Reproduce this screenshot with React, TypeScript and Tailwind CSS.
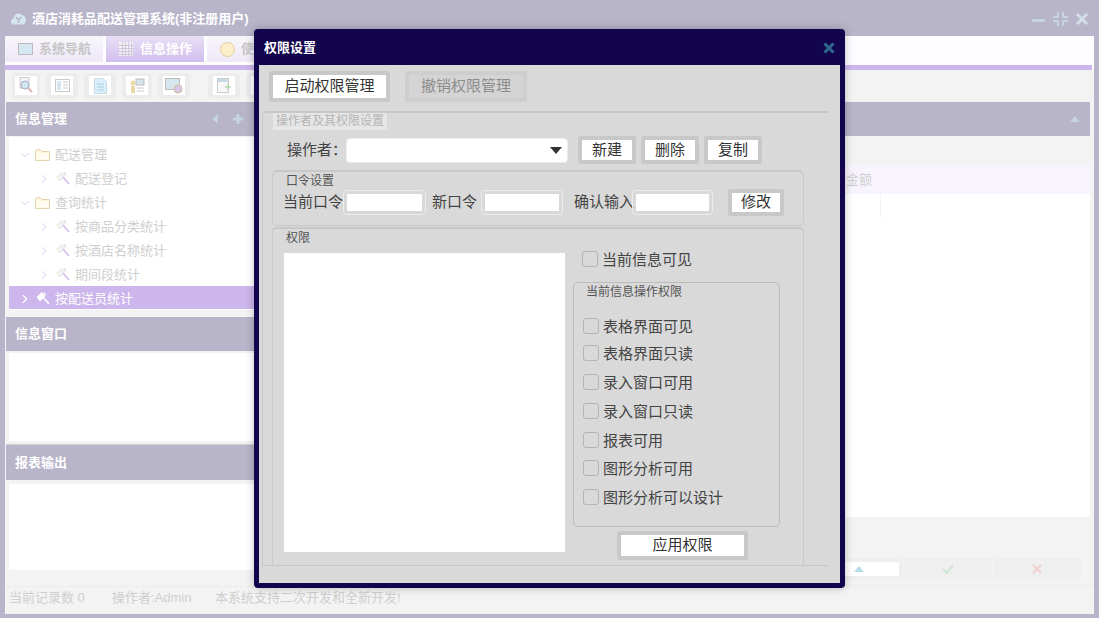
import { ChevronDown, ChevronRight } from "lucide-react";

const font = "[font-family:'Liberation_Sans','Noto_Sans_CJK_SC',sans-serif]";

const FolderIcon = () => (
  <svg width="15" height="14" viewBox="0 0 15 14" className="shrink-0">
    <path d="M0.5 3 L0.5 12.5 L14.5 12.5 L14.5 3.5 L7 3.5 L5.5 1.5 L1.5 1.5 Z" fill="#fff6d8" stroke="#e2d6b0" strokeWidth="1" />
    <rect x="1.5" y="5" width="12" height="6.5" fill="#fffdf2" />
  </svg>
);

const ToolIcon = ({ active = false }: { active?: boolean }) => (
  <svg width="16" height="16" viewBox="0 0 16 16" className="shrink-0">
    <path d="M2 6 L7 1.5 L10 4.5 L5 10 Z" fill={active ? "#fff" : "#f2f2f2"} stroke={active ? "#fff" : "#dddddd"} strokeDasharray={active ? undefined : "1 1"} />
    <path d="M8 6 L14 13" stroke={active ? "#fff" : "#d4b8f0"} strokeWidth="1.6" />
    <path d="M9 1 L11 4" stroke={active ? "#fff" : "#cccccc"} strokeWidth="1" />
  </svg>
);

const tree = [
  { label: "配送管理", depth: 0, folder: true },
  { label: "配送登记", depth: 1 },
  { label: "查询统计", depth: 0, folder: true },
  { label: "按商品分类统计", depth: 1 },
  { label: "按酒店名称统计", depth: 1 },
  { label: "期间段统计", depth: 1 },
];

const PanelHead = ({ title, children, h = "h-[34px]" }: { title: string; children?: React.ReactNode; h?: string }) => (
  <div className={`flex shrink-0 items-center justify-between bg-[#b8b4c9] pl-[9px] pr-[10px] text-[13px] font-bold text-white ${h}`}>
    <span>{title}</span>
    {children}
  </div>
);

const ToolBtn = ({ w, children }: { w: string; children: React.ReactNode }) => (
  <div className={`flex h-[25px] items-center justify-center rounded-[4px] bg-[#ececec] ${w}`}>
    <div className="flex h-[19px] w-[22px] items-center justify-center bg-white">{children}</div>
  </div>
);

const Btn = ({ className, children }: { className: string; children: React.ReactNode }) => (
  <div className={`flex items-center justify-center rounded-[3px] border-[4px] border-[#c8c8c8] bg-white text-[15px] text-[#333] ${className}`}>
    {children}
  </div>
);

const TextBox = ({ className }: { className: string }) => (
  <div className={`h-[25px] rounded-[4px] border border-[#ececec] p-[3px] ${className}`}>
    <div className="h-full bg-white" />
  </div>
);

const Check = ({ label, className }: { label: string; className: string }) => (
  <div className={`flex h-[20px] items-center gap-[4px] text-[15px] leading-none text-[#444] ${className}`}>
    <div className="h-[16px] w-[16px] rounded-[3px] border border-[#b4b4b4] bg-[#d9d9d9]" />
    {label}
  </div>
);

const PermissionDialog = () => (
  <div className="absolute left-[254px] top-[29px] flex h-[559px] w-[591px] flex-col rounded-[4px] bg-[#12054e] px-[5px] pb-[5px] shadow-[0_0_8px_rgba(0,0,0,0.25)]">
    <div className="flex h-[36px] shrink-0 items-center justify-between pl-[5px] pr-[5px] pt-[2px] text-[13px] font-bold text-white">
      <span>权限设置</span>
      <svg width="12" height="12" viewBox="0 0 12 12">
        <path d="M1.5 1.5 L10.5 10.5 M10.5 1.5 L1.5 10.5" stroke="#2f6a8c" strokeWidth="3" />
      </svg>
    </div>
    <div className="flex-1 bg-[#d9d9d9] pl-[3px] pt-[6px]">
      <div className="flex gap-[15px] pl-[7px]">
        <Btn className="h-[31px] w-[121px]">启动权限管理</Btn>
        <div className="flex h-[31px] w-[122px] items-center justify-center rounded-[3px] border-[4px] border-[#cecece] bg-[#d4d4d4] text-[15px] text-[#8c8c8c]">
          撤销权限管理
        </div>
      </div>

      <div className="mt-[9px] h-[455px] w-[566px] rounded-tl-[5px] border-b border-l border-t-2 border-[#c8c8c8] pl-[9px]">
        <div className="ml-px h-[17px] w-[114px] bg-[#e6e6e6] text-center text-[12px] leading-[17px] text-[#b4b4b4]">
          操作者及其权限设置
        </div>

        <div className="mt-[6px] flex h-[28px] items-center text-[15px] text-[#444]">
          <span className="ml-[15px] w-[59px] whitespace-nowrap">操作者：</span>
          <div className="flex h-[25px] w-[222px] items-center justify-end rounded-[4px] border border-[#ececec] bg-white pr-[5px]">
            <svg width="12" height="7" viewBox="0 0 12 7">
              <path d="M0 0 H12 L6 7 Z" fill="#333" />
            </svg>
          </div>
          <Btn className="ml-[10px] h-[28px] w-[58px]">新建</Btn>
          <Btn className="ml-[5px] h-[28px] w-[58px]">删除</Btn>
          <Btn className="ml-[5px] h-[28px] w-[58px]">复制</Btn>
        </div>

        <div className="mt-[6px] h-[56px] w-[532px] rounded-[5px] border border-t-2 border-[#c8c8c8] pl-[10px]">
          <div className="pl-[3px] pt-[2px] text-[12px] leading-[14px] text-[#555]">口令设置</div>
          <div className="mt-px flex h-[27px] items-center whitespace-nowrap text-[15px] text-[#444]">
            <span className="w-[60px]">当前口令</span>
            <TextBox className="w-[83px]" />
            <span className="ml-[6px] w-[49px]">新口令</span>
            <TextBox className="w-[82px]" />
            <span className="ml-[11px] w-[58px]">确认输入</span>
            <TextBox className="w-[81px]" />
            <Btn className="ml-[15px] h-[27px] w-[56px]">修改</Btn>
          </div>
        </div>

        <div className="mt-px flex h-[338px] w-[532px] flex-col rounded-t-[5px] border-x border-t-2 border-[#c8c8c8] pl-[11px]">
          <div className="pl-[2px] pt-[2px] text-[12px] leading-[14px] text-[#555]">权限</div>
          <div className="mt-[8px] flex">
            <div className="h-[299px] w-[281px] shrink-0 bg-white" />
            <div className="ml-[8px] flex w-[207px] flex-col">
              <Check label="当前信息可见" className="-mt-[4px] ml-[9px]" />
              <div className="mt-[13px] h-[245px] w-[207px] rounded-[5px] border border-[#bcbcbc] pl-[9px]">
                <div className="pl-[3px] pt-[2px] text-[12px] leading-[14px] text-[#555]">当前信息操作权限</div>
                <Check label="表格界面可见" className="mt-[17px]" />
                <Check label="表格界面只读" className="mt-[7px]" />
                <Check label="录入窗口可用" className="mt-[9px]" />
                <Check label="录入窗口只读" className="mt-[9px]" />
                <Check label="报表可用" className="mt-[9px]" />
                <Check label="图形分析可用" className="mt-[8px]" />
                <Check label="图形分析可以设计" className="mt-[9px]" />
              </div>
              <Btn className="ml-[44px] mt-[4px] h-[29px] w-[131px]">应用权限</Btn>
            </div>
          </div>
        </div>
      </div>
    </div>
  </div>
);

export default function App() {
  return (
    <div className={`relative flex h-[618px] w-[1099px] flex-col overflow-hidden bg-[#b8b4c9] pl-[5px] pr-[5px] pb-[4px] ${font}`}>
      <div className="flex h-[36px] shrink-0 items-center justify-between pl-[5px] pr-[6px] pt-px text-[13px] font-bold text-white">
        <div className="flex items-center gap-[5px]">
          <svg width="17" height="13" viewBox="0 0 17 13">
            <path d="M4 12.5 C0 12.5 0 7 3.5 6.5 C4 2 9 0 11.5 3 C15 3 17 7 15.5 10 C15 12 13 12.5 12 12.5 Z" fill="#d5e6ef" />
            <path d="M6 5 L8.5 8 L8.5 11 M11.5 5 L8.5 8" stroke="#b8b4c9" strokeWidth="1.5" fill="none" />
          </svg>
          <span>酒店消耗品配送管理系统(非注册用户)</span>
        </div>
        <div className="flex items-center gap-[8px]">
          <div className="mt-[4px] h-[3px] w-[13px] bg-[#c5d4df]" />
          <svg width="15" height="14" viewBox="0 0 15 14">
            <path d="M5 0 V5 H0 M10 0 V5 H15 M5 14 V9 H0 M10 14 V9 H15" stroke="#c5d4df" strokeWidth="2" fill="none" />
          </svg>
          <svg width="12" height="12" viewBox="0 0 12 12">
            <path d="M1 1 L11 11 M11 1 L1 11" stroke="#d3dfe7" strokeWidth="3" />
          </svg>
        </div>
      </div>

      <div className="flex min-h-0 flex-1 flex-col bg-[#f3f3f3]">
        <div className="h-[34px] shrink-0 bg-[#fdfcff]">
          <div className="flex h-[29px] gap-[3px]">
            <div className="flex h-[28px] w-[98px] items-center gap-[6px] border-b-2 border-white bg-linear-to-b from-[#f8f6fc] to-[#efe9f8] pl-[13px] text-[13px] font-bold text-[#c6c6c6]">
              <div className="h-[12px] w-[15px] border border-[#bbb] bg-[#d5e8f2]" />
              系统导航
            </div>
            <div className="flex h-[28px] w-[98px] items-center gap-[7px] border-b-2 border-white bg-linear-to-b from-[#e8e0f6] to-[#d0bdec] pl-[13px] text-[13px] font-bold text-white">
              <svg width="14" height="14" viewBox="0 0 14 14">
                <rect width="14" height="14" fill="#f2f2f2" />
                <path d="M0 3.5 H14 M0 6.5 H14 M0 9.5 H14 M0 12.5 H14 M3.5 0 V14 M6.5 0 V14 M9.5 0 V14 M12.5 0 V14" stroke="#cfc6de" />
              </svg>
              信息操作
            </div>
            <div className="flex h-[28px] w-[98px] items-center gap-[6px] border-b-2 border-white bg-linear-to-b from-[#f8f6fc] to-[#efe9f8] pl-[13px] text-[13px] font-bold text-[#c6c6c6]">
              <div className="h-[15px] w-[15px] rounded-full border border-[#e0d0a0] bg-[#fdeecb]" />
              使用帮助
            </div>
          </div>
          <div className="mr-[2px] h-[5px] bg-[#cdb6ec]" />
        </div>

        <div className="flex h-[32px] shrink-0 items-center gap-[6px] pb-px pl-[7px]">
          <ToolBtn w="w-[28px]">
            <svg width="14" height="17" viewBox="0 0 14 17"><path d="M1 0.5 H10 V11 H1 Z" fill="#f4f4f4" stroke="#ccc" /><circle cx="6" cy="8" r="4" fill="#cfe6f2" stroke="#aac" /><path d="M9 11 L13 15" stroke="#e0b8b0" strokeWidth="2" /></svg>
          </ToolBtn>
          <ToolBtn w="w-[32px]">
            <svg width="15" height="13" viewBox="0 0 15 13"><rect x="0.5" y="0.5" width="14" height="12" fill="#fff" stroke="#c9c9c9" /><rect x="2" y="2" width="4" height="9" fill="#d5e6ef" /><path d="M8 3 H13 M8 6 H13 M8 9 H13" stroke="#ccc" /></svg>
          </ToolBtn>
          <ToolBtn w="w-[32px]">
            <svg width="13" height="16" viewBox="0 0 13 16"><path d="M0.5 0.5 H9 L12.5 4 V15.5 H0.5 Z" fill="#ddeffa" stroke="#c5dbe8" /><path d="M3 6 H10 M3 9 H10 M3 12 H10" stroke="#a8cde0" /></svg>
          </ToolBtn>
          <ToolBtn w="w-[30px]">
            <svg width="16" height="16" viewBox="0 0 16 16"><rect x="7" y="1" width="8" height="6" fill="#d5e6ef" stroke="#bbb" /><circle cx="4" cy="5" r="2.5" fill="#ecd9a8" /><path d="M2 8 H6 V15 H2 Z" fill="#e8d6a4" /><path d="M8 10 H15 M8 13 H15" stroke="#ccc" /></svg>
          </ToolBtn>
          <ToolBtn w="w-[32px]">
            <svg width="18" height="16" viewBox="0 0 18 16"><rect x="0.5" y="0.5" width="14" height="11" fill="#d5e6ef" stroke="#bbb" /><circle cx="13" cy="11" r="4" fill="#d8c8e8" stroke="#cbbf9e" /></svg>
          </ToolBtn>
          <div className="w-[6px]" />
          <ToolBtn w="w-[32px]">
            <svg width="14" height="15" viewBox="0 0 14 15"><rect x="0.5" y="0.5" width="11" height="14" fill="#f7f7f7" stroke="#ccc" /><rect x="1" y="1" width="10" height="3" fill="#c5dce8" /><path d="M8 9 H14 M11 6 V12" stroke="#b5d8b5" strokeWidth="1.5" /></svg>
          </ToolBtn>
          <ToolBtn w="w-[32px]">
            <svg width="14" height="15" viewBox="0 0 14 15"><rect x="1.5" y="3.5" width="11" height="10" fill="#f2f2f2" stroke="#bbb" /></svg>
          </ToolBtn>
        </div>

        <div className="flex min-h-0 flex-1 pl-px">
          <div className="flex w-[262px] shrink-0 flex-col">
            <PanelHead title="信息管理">
              <div className="flex items-center gap-[14px] pr-[14px]">
                <svg width="6" height="10" viewBox="0 0 6 10"><path d="M6 0 V10 L0 5 Z" fill="#c5d4df" /></svg>
                <svg width="12" height="12" viewBox="0 0 12 12"><path d="M6 1 V11 M1 6 H11" stroke="#c5d4df" strokeWidth="3" /></svg>
              </div>
            </PanelHead>
            <div className="ml-[3px] mt-px h-[173px] shrink-0 bg-white text-[13px] text-[#cfcfcf]">
              <div className="h-[6px]" />
              {tree.map((row) =>
                row.depth === 0 ? (
                  <div key={row.label} className="flex h-[24px] items-center pl-[9px]">
                    <ChevronDown size={14} strokeWidth={1.5} className="text-[#d4c6ec]" />
                    <span className="ml-[3px]"><FolderIcon /></span>
                    <span className="ml-[5px]">{row.label}</span>
                  </div>
                ) : (
                  <div key={row.label} className="flex h-[24px] items-center pl-[28px]">
                    <ChevronRight size={14} strokeWidth={1.5} className="text-[#d4c6ec]" />
                    <span className="ml-[4px]"><ToolIcon /></span>
                    <span className="ml-[4px]">{row.label}</span>
                  </div>
                ),
              )}
              <div className="-mt-px flex h-[23px] items-center bg-[#cdb6ec] pl-[9px] pt-[3px] text-white">
                <ChevronRight size={14} strokeWidth={2} />
                <span className="ml-[3px]"><ToolIcon active /></span>
                <span className="ml-[4px]">按配送员统计</span>
              </div>
            </div>

            <div className="mt-[7px] shrink-0">
              <PanelHead title="信息窗口" />
            </div>
            <div className="ml-[3px] mt-[2px] h-[88px] shrink-0 bg-white" />
            <div className="mt-[3px] h-px shrink-0 bg-[#d0d0d0]" />
            <PanelHead title="报表输出" h="h-[35px]" />
            <div className="ml-[3px] mt-[4px] h-[86px] shrink-0 bg-white" />
          </div>

          <div className="flex min-w-0 flex-1 flex-col pr-[4px]">
            <PanelHead title="">
              <svg width="10" height="6" viewBox="0 0 10 6"><path d="M0 6 L5 0 L10 6 Z" fill="#c5d4df" /></svg>
            </PanelHead>
            <div className="h-[29px] shrink-0" />
            <div className="flex h-[29px] shrink-0 items-center justify-end bg-[#f8f4fd] pr-[218px] text-[13px] text-[#cfcfcf]">金额</div>
            <div className="h-[323px] shrink-0 bg-white pl-[612px]">
              <div className="h-[24px] w-px bg-[#f4f4f4]" />
            </div>
            <div className="flex h-[68px] shrink-0 items-end justify-end gap-px border-b border-[#ececec] pb-[4px] pr-[9px]">
              <div className="flex h-[22px] w-[88px] items-center justify-center rounded-[3px] border-[4px] border-[#efefef] bg-white">
                <svg width="10" height="6" viewBox="0 0 10 6"><path d="M0 6 L5 0 L10 6 Z" fill="#b5deea" /></svg>
              </div>
              <div className="flex h-[22px] w-[88px] items-center justify-center rounded-[3px] bg-[#efefef]">
                <svg width="12" height="10" viewBox="0 0 12 10"><path d="M1 5 L4.5 9 L11 1" stroke="#cfe6d4" strokeWidth="2" fill="none" /></svg>
              </div>
              <div className="flex h-[22px] w-[88px] items-center justify-center rounded-[3px] bg-[#efefef]">
                <svg width="10" height="10" viewBox="0 0 10 10"><path d="M1 1 L9 9 M9 1 L1 9" stroke="#f3cfcf" strokeWidth="2" /></svg>
              </div>
            </div>
          </div>
        </div>

        <div className="flex h-[28px] shrink-0 items-start border-t border-[#ececec] pl-[4px] pt-[2px] text-[13px] leading-[18px] text-[#cfcfcf]">
          <span className="w-[103px]">当前记录数 0</span>
          <span className="w-[103px]">操作者:Admin</span>
          <span>本系统支持二次开发和全新开发!</span>
        </div>
      </div>

      <PermissionDialog />
    </div>
  );
}
